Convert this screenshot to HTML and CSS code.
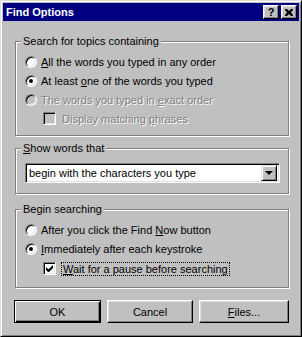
FILE: index.html
```html
<!DOCTYPE html>
<html lang="en">

<head>
    <meta charset="UTF-8">
    <title>Find Options</title>
    <link rel="stylesheet" href="styles.css">
</head>

<body>
    <div class="window">
        <div class="titlebar">
            <span class="title">Find Options</span>
            <span class="tb-buttons">
                <span class="tb-btn tb-help">?</span>
                <span class="tb-btn">
                    <svg width="8" height="7" viewBox="0 0 8 7">
                        <path d="M0 0h2l2 2 2-2h2v1l-2 2.5 2 2.5v1h-2l-2-2-2 2h-2v-1l2-2.5-2-2.5z" fill="#000"/>
                    </svg>
                </span>
            </span>
        </div>

        <div class="dialog">
            <fieldset class="group group-search">
                <legend>Search for topics containing</legend>
                <div class="row"><span class="radio"></span><span class="label"><u>A</u>ll the words you typed in any order</span></div>
                <div class="row"><span class="radio checked"></span><span class="label">At least <u>o</u>ne of the words you typed</span></div>
                <div class="row disabled"><span class="radio"></span><span class="label">The words you typed in <u>e</u>xact order</span></div>
                <div class="row sub disabled"><span class="check"></span><span class="label">Display matching <u>p</u>hrases</span></div>
            </fieldset>

            <fieldset class="group group-show">
                <legend><u>S</u>how words that</legend>
                <div class="select">
                    <span class="select-text">begin with the characters you type</span>
                    <span class="select-btn"><span class="arrow"></span></span>
                </div>
            </fieldset>

            <fieldset class="group group-begin">
                <legend>Begin searching</legend>
                <div class="row"><span class="radio"></span><span class="label">After you click the Find <u>N</u>ow button</span></div>
                <div class="row"><span class="radio checked"></span><span class="label"><u>I</u>mmediately after each keystroke</span></div>
                <div class="row sub"><span class="check checked">
                    <svg width="7" height="7" viewBox="0 0 7 7">
                        <path d="M0 2v3l2 2h1l4-4v-3l-4 4h-1z" fill="#000"/>
                    </svg>
                </span><span class="label focus"><u>W</u>ait for a pause before searching</span></div>
            </fieldset>

            <div class="buttons">
                <span class="btn btn-default">OK</span>
                <span class="btn">Cancel</span>
                <span class="btn btn-files"><u>F</u>iles...</span>
            </div>
        </div>
    </div>
</body>

</html>
```

FILE: styles.css
```css
* {
    box-sizing: border-box;
}

body {
    margin: 0;
    font-family: "Liberation Sans", Arial, sans-serif;
    font-size: 11px;
    color: #000;
    background: #c0c0c0;
}

.window {
    width: 302px;
    height: 337px;
    background: #c0c0c0;
    border: 1px solid;
    border-color: #dfdfdf #000 #000 #dfdfdf;
    box-shadow: inset 1px 1px #fff, inset -1px -1px #808080;
    padding: 2px;
}

.titlebar {
    height: 18px;
    background: #000080;
    color: #fff;
    display: flex;
    align-items: center;
    justify-content: space-between;
    padding: 0 2px 0 3px;
}

.title {
    font-weight: bold;
    font-size: 11px;
}

.tb-buttons {
    display: flex;
    gap: 2px;
}

.tb-btn {
    width: 16px;
    height: 14px;
    background: #c0c0c0;
    border: 1px solid;
    border-color: #fff #000 #000 #fff;
    box-shadow: inset -1px -1px #808080, inset 1px 1px #dfdfdf;
    display: flex;
    align-items: center;
    justify-content: center;
    color: #000;
}

.tb-help {
    font-weight: bold;
    font-size: 11px;
    line-height: 1;
}

.dialog {
    padding: 0 10px 0 12px;
}

.group {
    margin: 0;
    border: 1px solid #808080;
    box-shadow: inset 1px 1px #fff, 1px 1px #fff;
    padding: 4px 8px 7px 9px;
    min-width: 0;
}

.group legend {
    padding: 0 2px;
    margin-left: -4px;
    background: #c0c0c0;
    line-height: 13px;
}

.group-search {
    margin-top: 14px;
}

.group-show {
    margin-top: 6px;
    padding-top: 8px;
    padding-bottom: 10px;
}

.group-begin {
    margin-top: 9px;
    padding-bottom: 8px;
}

.row {
    height: 19px;
    display: flex;
    align-items: center;
}

.row.sub {
    padding-left: 18px;
}

.group-begin .row.sub {
    height: 21px;
}

.row .label {
    margin-left: 4px;
    white-space: nowrap;
}

.row.sub .label {
    margin-left: 6px;
}

.disabled .label {
    color: #808080;
    text-shadow: 1px 1px #fff;
}

.radio {
    width: 12px;
    height: 12px;
    border-radius: 50%;
    background: #fff;
    border: 1px solid;
    border-color: #808080 #fff #fff #808080;
    box-shadow: inset 1px 1px #000, inset -1px -1px #dfdfdf;
    display: flex;
    align-items: center;
    justify-content: center;
    flex: none;
}

.radio.checked::after {
    content: "";
    width: 4px;
    height: 4px;
    border-radius: 50%;
    background: #000;
}

.disabled .radio,
.disabled .check {
    background: #c0c0c0;
}

.check {
    width: 13px;
    height: 13px;
    background: #fff;
    border: 1px solid;
    border-color: #808080 #fff #fff #808080;
    box-shadow: inset 1px 1px #000, inset -1px -1px #dfdfdf;
    display: flex;
    align-items: center;
    justify-content: center;
    flex: none;
}

.label.focus {
    outline: 1px dotted #000;
    outline-offset: 0;
    padding: 0 1px;
}

.select {
    height: 20px;
    background: #fff;
    border: 1px solid;
    border-color: #808080 #fff #fff #808080;
    box-shadow: inset 1px 1px #000, inset -1px -1px #dfdfdf;
    display: flex;
    align-items: center;
    justify-content: space-between;
    padding: 2px;
}

.select-text {
    padding-left: 1px;
}

.select-btn {
    width: 16px;
    height: 16px;
    background: #c0c0c0;
    border: 1px solid;
    border-color: #dfdfdf #000 #000 #dfdfdf;
    box-shadow: inset 1px 1px #fff, inset -1px -1px #808080;
    display: flex;
    align-items: center;
    justify-content: center;
}

.arrow {
    width: 0;
    height: 0;
    border-left: 4px solid transparent;
    border-right: 4px solid transparent;
    border-top: 4px solid #000;
}

.buttons {
    display: flex;
    gap: 6px;
    margin-top: 12px;
}

.btn {
    width: 87px;
    height: 23px;
    background: #c0c0c0;
    border: 1px solid;
    border-color: #fff #000 #000 #fff;
    box-shadow: inset -1px -1px #808080, inset 1px 1px #dfdfdf;
    display: flex;
    align-items: center;
    justify-content: center;
    font-size: 11px;
}

.btn-default {
    width: 88px;
    margin-left: -1px;
    border: 1px solid #000;
    box-shadow: inset 1px 1px #fff, inset -1px -1px #000, inset -2px -2px #808080;
}

.btn-files {
    width: 91px;
}
```
